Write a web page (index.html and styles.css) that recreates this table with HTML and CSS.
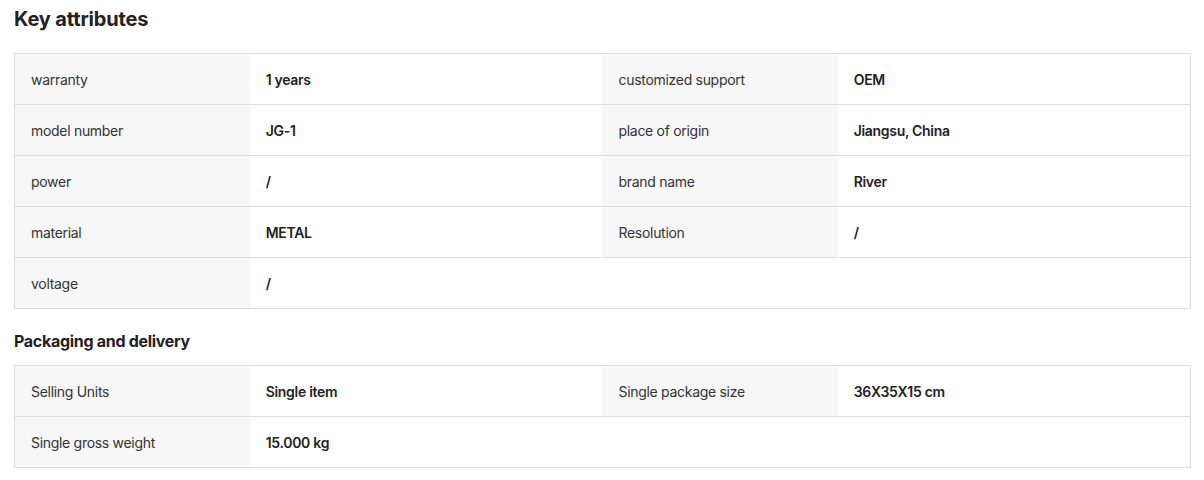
FILE: index.html
```html
<!DOCTYPE html>
<html lang="en">
<head>
<meta charset="utf-8">
<title>Key attributes</title>
<link rel="stylesheet" href="styles.css">
</head>
<body>
<div class="page">
  <h2 class="title">Key attributes</h2>
  <table class="attrs">
    <colgroup><col class="c-label"><col class="c-value"><col class="c-label"><col class="c-value"></colgroup>
    <tbody>
      <tr><td class="label">warranty</td><td class="value">1 years</td><td class="label">customized support</td><td class="value">OEM</td></tr>
      <tr><td class="label">model number</td><td class="value">JG-1</td><td class="label">place of origin</td><td class="value">Jiangsu, China</td></tr>
      <tr><td class="label">power</td><td class="value">/</td><td class="label">brand name</td><td class="value">River</td></tr>
      <tr><td class="label">material</td><td class="value">METAL</td><td class="label">Resolution</td><td class="value">/</td></tr>
      <tr><td class="label">voltage</td><td class="value">/</td><td class="empty"></td><td class="empty"></td></tr>
    </tbody>
  </table>
  <h3 class="subtitle">Packaging and delivery</h3>
  <table class="attrs">
    <colgroup><col class="c-label"><col class="c-value"><col class="c-label"><col class="c-value"></colgroup>
    <tbody>
      <tr><td class="label">Selling Units</td><td class="value">Single item</td><td class="label">Single package size</td><td class="value">36X35X15 cm</td></tr>
      <tr><td class="label">Single gross weight</td><td class="value">15.000 kg</td><td class="empty"></td><td class="empty"></td></tr>
    </tbody>
  </table>
</div>
</body>
</html>
```

FILE: styles.css
```css
* { box-sizing: border-box; }
html, body { margin: 0; padding: 0; background: #ffffff; }
body {
  font-family: Inter, "Liberation Sans", Arial, sans-serif;
  color: #222222;
}
.page {
  padding: 5px 13px 0 14px;
}
.title {
  margin: 0 0 20px 0;
  font-size: 20px;
  line-height: 28px;
  font-weight: 700;
  letter-spacing: -0.15px;
  color: #222222;
}
.subtitle {
  margin: 20px 0 12px 0;
  font-size: 16px;
  line-height: 24px;
  font-weight: 700;
  letter-spacing: -0.3px;
  color: #222222;
}
.attrs {
  width: 1177px;
  border-collapse: collapse;
  table-layout: fixed;
  border: 1px solid #dddddd;
}
.c-label { width: 20%; }
.c-value { width: 30%; }
.attrs tr { border-bottom: 1px solid #dddddd; }
.attrs td {
  height: 51px;
  padding: 2px 16px 0 16px;
  font-size: 14px;
  line-height: 20px;
  letter-spacing: -0.3px;
  vertical-align: middle;
}
.label {
  background: #f7f7f7;
  color: #333333;
  font-weight: 400;
}
.value {
  background: #ffffff;
  color: #222222;
  font-weight: 600;
}
.empty { background: #ffffff; }
```
